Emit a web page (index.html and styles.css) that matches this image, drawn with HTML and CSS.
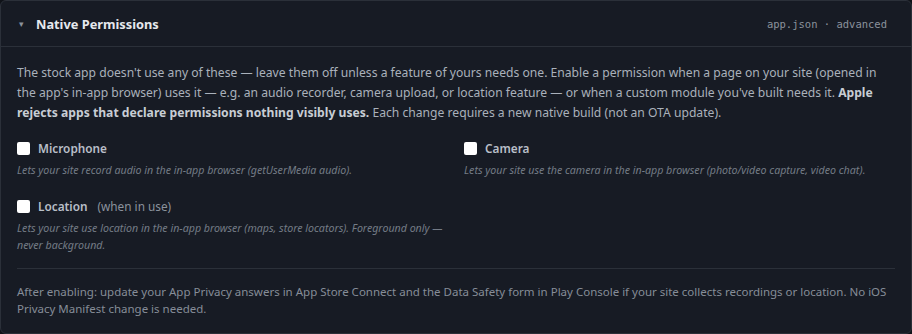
FILE: index.html
```html
<!DOCTYPE html>
<html lang="en">
<head>
    <meta charset="UTF-8">
    <title>Native Permissions</title>
    <link rel="stylesheet" href="styles.css">
</head>
<body>
    <section class="panel">
        <header class="panel-head">
            <span class="caret">▾</span>
            <h2>Native Permissions</h2>
            <span class="meta">app.json · advanced</span>
        </header>

        <div class="panel-body">
            <p class="intro">The stock app doesn't use any of these — leave them off unless a feature of yours needs one. Enable a permission when a page on your site (opened in the app's in-app browser) uses it — e.g. an audio recorder, camera upload, or location feature — or when a custom module you've built needs it. <strong>Apple rejects apps that declare permissions nothing visibly uses.</strong> Each change requires a new native build (not an OTA update).</p>

            <div class="perm-grid">
                <div class="perm">
                    <label class="perm-label"><input type="checkbox"> <span>Microphone</span></label>
                    <p class="perm-desc">Lets your site record audio in the in-app browser (getUserMedia audio).</p>
                </div>
                <div class="perm">
                    <label class="perm-label"><input type="checkbox"> <span>Camera</span></label>
                    <p class="perm-desc">Lets your site use the camera in the in-app browser (photo/video capture, video chat).</p>
                </div>
                <div class="perm">
                    <label class="perm-label"><input type="checkbox"> <span>Location</span> <em class="hint">(when in use)</em></label>
                    <p class="perm-desc">Lets your site use location in the in-app browser (maps, store locators). Foreground only — never background.</p>
                </div>
            </div>

            <p class="footnote">After enabling: update your App Privacy answers in App Store Connect and the Data Safety form in Play Console if your site collects recordings or location. No iOS Privacy Manifest change is needed.</p>
        </div>
    </section>
</body>
</html>
```

FILE: styles.css
```css
* {
    margin: 0;
    padding: 0;
    box-sizing: border-box;
}

body {
    font-family: 'Segoe UI', 'Noto Sans', sans-serif;
    background: #0f1218;
    width: 912px;
    height: 334px;
}

.panel {
    background: #171b24;
    border: 1px solid #2b3039;
    border-radius: 6px;
    height: 334px;
    overflow: hidden;
}

.panel-head {
    display: flex;
    align-items: center;
    height: 46px;
    padding: 0 24px 0 18px;
    border-bottom: 1px solid #2b3039;
}

.caret {
    color: #8b929c;
    font-size: 9px;
    width: 17px;
}

.panel-head h2 {
    color: #e6e9ee;
    font-size: 12.8px;
    font-weight: 700;
    flex: 1;
}

.meta {
    font-family: 'DejaVu Sans Mono', monospace;
    font-size: 10.5px;
    color: #8b929c;
}

.panel-body {
    padding: 16px 16px 0 16px;
}

.intro {
    color: #aab1bb;
    font-size: 12.15px;
    line-height: 20px;
}

.intro strong {
    color: #c8cdd4;
}

.perm-grid {
    display: grid;
    grid-template-columns: 1fr 1fr;
    column-gap: 16px;
    row-gap: 17px;
    margin-top: 15px;
}

.perm-label {
    display: flex;
    align-items: center;
    gap: 8px;
    height: 20px;
    font-size: 11.8px;
    color: #8b929c;
}

.perm-label input {
    appearance: none;
    width: 13px;
    height: 13px;
    background: #fff;
    border-radius: 2px;
}

.perm-label span {
    font-weight: 600;
    color: #b9bfc8;
}

.hint {
    font-style: normal;
    margin-left: 2px;
}

.perm-desc {
    font-size: 10.65px;
    font-style: italic;
    color: #747b86;
    line-height: 17px;
    margin-top: 4px;
}

.footnote {
    margin-top: 14px;
    padding-top: 14px;
    border-top: 1px solid #2b3039;
    color: #868d98;
    font-size: 11.5px;
    line-height: 17px;
}
```
